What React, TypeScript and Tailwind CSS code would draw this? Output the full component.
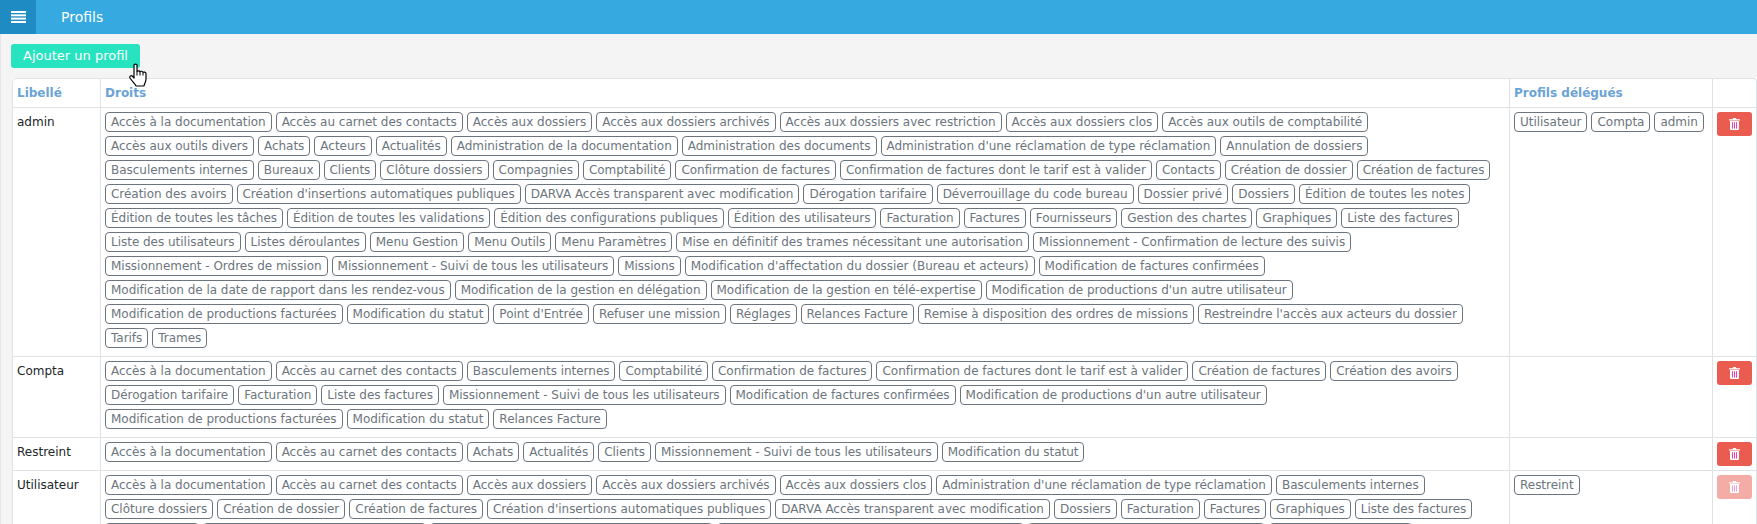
import React from 'react';

const rows = [
  {
    label: 'admin',
    rights: ["Accès à la documentation","Accès au carnet des contacts","Accès aux dossiers","Accès aux dossiers archivés","Accès aux dossiers avec restriction","Accès aux dossiers clos","Accès aux outils de comptabilité","Accès aux outils divers","Achats","Acteurs","Actualités","Administration de la documentation","Administration des documents","Administration d'une réclamation de type réclamation","Annulation de dossiers","Basculements internes","Bureaux","Clients","Clôture dossiers","Compagnies","Comptabilité","Confirmation de factures","Confirmation de factures dont le tarif est à valider","Contacts","Création de dossier","Création de factures","Création des avoirs","Création d'insertions automatiques publiques","DARVA Accès transparent avec modification","Dérogation tarifaire","Déverrouillage du code bureau","Dossier privé","Dossiers","Édition de toutes les notes","Édition de toutes les tâches","Édition de toutes les validations","Édition des configurations publiques","Édition des utilisateurs","Facturation","Factures","Fournisseurs","Gestion des chartes","Graphiques","Liste des factures","Liste des utilisateurs","Listes déroulantes","Menu Gestion","Menu Outils","Menu Paramètres","Mise en définitif des trames nécessitant une autorisation","Missionnement - Confirmation de lecture des suivis","Missionnement - Ordres de mission","Missionnement - Suivi de tous les utilisateurs","Missions","Modification d'affectation du dossier (Bureau et acteurs)","Modification de factures confirmées","Modification de la date de rapport dans les rendez-vous","Modification de la gestion en délégation","Modification de la gestion en télé-expertise","Modification de productions d'un autre utilisateur","Modification de productions facturées","Modification du statut","Point d'Entrée","Refuser une mission","Réglages","Relances Facture","Remise à disposition des ordres de missions","Restreindre l'accès aux acteurs du dossier","Tarifs","Trames"],
    delegated: ['Utilisateur', 'Compta', 'admin'],
  },
  {
    label: 'Compta',
    rights: ["Accès à la documentation","Accès au carnet des contacts","Basculements internes","Comptabilité","Confirmation de factures","Confirmation de factures dont le tarif est à valider","Création de factures","Création des avoirs","Dérogation tarifaire","Facturation","Liste des factures","Missionnement - Suivi de tous les utilisateurs","Modification de factures confirmées","Modification de productions d'un autre utilisateur","Modification de productions facturées","Modification du statut","Relances Facture"],
    delegated: [],
  },
  {
    label: 'Restreint',
    rights: ["Accès à la documentation","Accès au carnet des contacts","Achats","Actualités","Clients","Missionnement - Suivi de tous les utilisateurs","Modification du statut"],
    delegated: [],
  },
  {
    label: 'Utilisateur',
    rights: ["Accès à la documentation","Accès au carnet des contacts","Accès aux dossiers","Accès aux dossiers archivés","Accès aux dossiers clos","Administration d'une réclamation de type réclamation","Basculements internes","Clôture dossiers","Création de dossier","Création de factures","Création d'insertions automatiques publiques","DARVA Accès transparent avec modification","Dossiers","Facturation","Factures","Graphiques","Liste des factures","Menu Gestion","Missionnement - Ordres de mission","Missionnement - Suivi de tous les utilisateurs","Modification de productions d'un autre utilisateur","Modification de productions facturées","Modification du statut"],
    delegated: ['Restreint'],
    disabled: true,
  },
];

function Tag({ text }: { text: string }) {
  return (
    <span className="inline-block h-5 border border-[#6c757d] rounded-[4px] px-[5px] mr-1 mb-1 text-[#6c757d] text-[12px] tracking-[-0.024px] leading-[18px] align-top whitespace-nowrap">
      {text}
    </span>
  );
}

function BarsIcon() {
  return (
    <svg width="15" height="12" viewBox="0 0 15 12" fill="#fff">
      <rect x="0" y="0" width="15" height="2" />
      <rect x="0" y="3.3" width="15" height="2" />
      <rect x="0" y="6.6" width="15" height="2" />
      <rect x="0" y="10" width="15" height="2" />
    </svg>
  );
}

function TrashIcon() {
  return (
    <svg width="11" height="12" viewBox="0 0 11 12">
      <path d="M3.5 1.2 L4.2 0 H6.8 L7.5 1.2 H11 V2.4 H0 V1.2 Z" fill="#fff" />
      <path d="M1 3 H10 V11 Q10 12 9 12 H2 Q1 12 1 11 Z" fill="#fff" />
      <rect x="3" y="4.2" width="1" height="6.4" fill="#f53fb0" />
      <rect x="5" y="4.2" width="1" height="6.4" fill="#f53fb0" />
      <rect x="7" y="4.2" width="1" height="6.4" fill="#f53fb0" />
    </svg>
  );
}

// the hand cursor that was caught in the capture
function HandCursor() {
  return (
    <svg width="18" height="24" viewBox="0 0 18 24" className="absolute left-[129px] top-[63px]">
      <path
        d="M5 2 C5 0.7 8 0.7 8 2 V8.5 C8.5 7.6 10.5 7.6 11 8.8 C11.5 8 13.5 8 14 9.4 C14.6 8.8 17 9 17 10.6 V16 C17 19 15.5 20.5 15 23 H7 C6 20.5 4 19.5 1 15 C0.2 13.7 1.8 12 3.2 13 L5 15 Z"
        fill="#fff"
        stroke="#000"
        strokeWidth="1.2"
        strokeLinejoin="round"
      />
      <path d="M8 8.5 V12.5 M11 8.8 V12.5 M14 9.4 V12.5" fill="none" stroke="#000" strokeWidth="1" />
    </svg>
  );
}

export default function App() {
  return (
    <div className="relative h-[524px] overflow-hidden bg-[#f4f4f4] font-['DejaVu_Sans',sans-serif] text-[12px] text-[#212529]">
      <div className="h-[34px] flex items-center bg-[#36a9e1] text-white">
        <div className="w-9 h-full flex items-center justify-center bg-[#1e8bc3]">
          <BarsIcon />
        </div>
        <div className="ml-[25px] text-[14px]">Profils</div>
      </div>
      <div className="h-[490px] pt-[10px] pl-[10px] border-l border-[#e6e6e6]">
        <button className="block h-6 w-[129px] rounded-[3px] bg-[#27e3c0] text-white text-[13px]">Ajouter un profil</button>
        <table className="ml-px mt-[10px] w-[1745px] border-separate border-spacing-0 bg-white table-fixed">
          <thead>
            <tr className="h-[30px] text-left font-bold text-[#6ba3d6]">
              <th className="w-[89px] pl-1 border border-[#dee2e6] rounded-tl-[4px]">Libellé</th>
              <th className="w-[1409px] pl-1 border-y border-r border-[#dee2e6]">Droits</th>
              <th className="w-[203px] pl-1 border-y border-r border-[#dee2e6]">Profils délégués</th>
              <th className="border-y border-r border-[#dee2e6] rounded-tr-[4px]"></th>
            </tr>
          </thead>
          <tbody>
            {rows.map((row) => (
              <tr key={row.label}>
                <td className="align-top pl-1 pt-1 border-x border-b border-[#dee2e6]">
                  <div className="leading-5">{row.label}</div>
                </td>
                <td className="align-top pl-1 pt-1 pb-1 border-r border-b border-[#dee2e6]">
                  {row.rights.map((r) => <Tag key={r} text={r} />)}
                </td>
                <td className="align-top pl-1 pt-1 border-r border-b border-[#dee2e6]">
                  {row.delegated.map((r) => <Tag key={r} text={r} />)}
                </td>
                <td className="align-top pl-1 pt-1 border-r border-b border-[#dee2e6]">
                  <button className={`w-[35px] h-6 rounded-[3px] flex items-center justify-center bg-[#ea5c50] ${row.disabled ? 'opacity-50' : ''}`}>
                    <TrashIcon />
                  </button>
                </td>
              </tr>
            ))}
          </tbody>
        </table>
      </div>
      <HandCursor />
    </div>
  );
}
